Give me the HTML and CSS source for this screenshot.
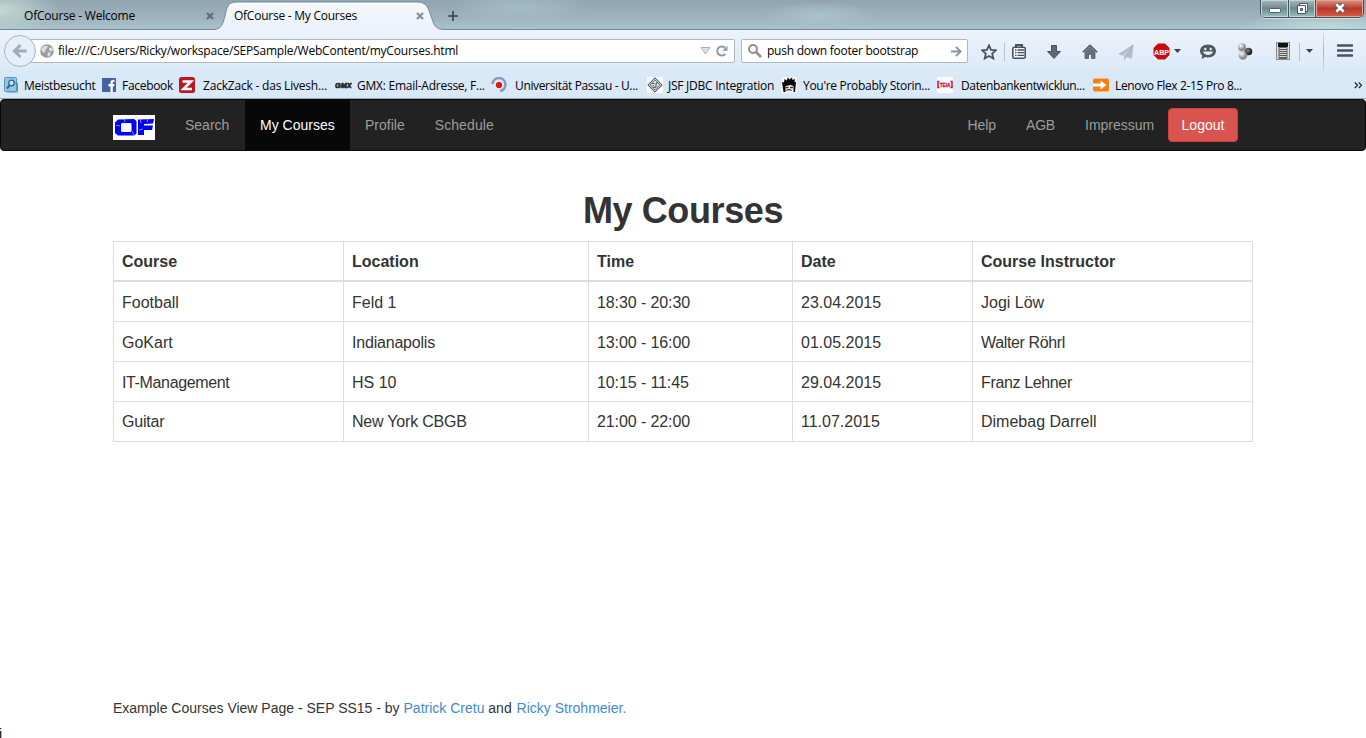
FILE: index.html
```
<!DOCTYPE html>
<html lang="en">
<head>
<meta charset="utf-8">
<title>OfCourse - My Courses</title>
<link rel="stylesheet" href="styles.css">
</head>
<body>
<header class="browser">
  <div class="tabstrip">
    <div class="tab"><span class="t t-tab1">OfCourse - Welcome</span>
      <svg class="close" width="8" height="8" viewBox="0 0 8 8"><path d="M1 1l6 6M7 1l-6 6" stroke="#5d6e7b" stroke-width="2.2"/></svg></div>
    <div class="tab tab-active">
      <svg class="tab-shape" width="240" height="30" viewBox="0 0 240 30"><defs><linearGradient id="tg" x2="0" y2="1"><stop offset="0" stop-color="#f6f9fd"/><stop offset="1" stop-color="#eaf1fa"/></linearGradient></defs><path d="M0 30V29.500C9 29.500 10 23 12 16C14 8 14 2 24 2H204C214 2 215 8 218 16C221 24 221 29.500 232 29.500V30Z" fill="url(#tg)"/><path d="M0 29.500C9 29.500 10 23 12 16C14 8 14 2 24 2H204C214 2 215 8 218 16C221 24 221 29.500 232 29.500" fill="none" stroke="#718b99"/></svg>
      <span class="t t-tab2">OfCourse - My Courses</span>
      <svg class="close" width="8" height="8" viewBox="0 0 8 8"><path d="M1 1l6 6M7 1l-6 6" stroke="#84909c" stroke-width="2.2"/></svg></div>
    <svg class="plus" width="10" height="10" viewBox="0 0 10 10"><path d="M5 0v10M0 5h10" stroke="#35444f" stroke-width="1.600"/></svg>
    <div class="wincontrols">
      <span class="wc wc-min"><svg width="12" height="5" viewBox="0 0 12 5"><rect x=".5" y=".5" width="11" height="4" rx="1" fill="#fff" stroke="#4b5b66"/></svg></span>
      <span class="wc wc-max"><svg width="13" height="13" viewBox="0 0 13 13"><path d="M3.500 1.500h8v8h-8z" fill="#fff" stroke="#4b5366"/><path d="M1.500 3.500h8v8h-8z" fill="#fff" stroke="#4b5366"/><path d="M4.500 6.500h2v2h-2z" fill="#88a" stroke="#4b5366"/></svg></span>
      <span class="wc wc-close"><svg width="12" height="10" viewBox="0 0 12 10"><path d="M2 1l8 8M10 1l-8 8" stroke="#5c4650" stroke-width="4.800"/><path d="M2.300 1.300l7.400 7.400M9.700 1.300L2.300 8.700" stroke="#fff" stroke-width="2.800"/></svg></span>
    </div>
  </div>

  <div class="toolbar">
    <span class="back"><svg width="16" height="16" viewBox="0 0 16 16"><path d="M14.500 8H4M8.500 2L2.500 8l6 6" fill="none" stroke="#a0abb7" stroke-width="3"/></svg></span>
    <div class="field urlbar">
      <svg width="14" height="14" viewBox="0 0 14 14"><circle cx="7" cy="7" r="6.800" fill="#9c9c9c"/><path d="M3 2.500l3-1 2 1-1 2-2 1 1 1.500-2 2L2 7 1 6zM9 4l3-.500 1 3-2 1-2-1zM8 8l3 1-1 2.500-2 1.300-.500-2z" fill="#dedede"/></svg>
      <span class="t t-url">file:///C:/Users/Ricky/workspace/SEPSample/WebContent/myCourses.html</span>
      <svg class="drop" width="11" height="8" viewBox="0 0 11 8"><path d="M1 .5h9L5.500 7z" fill="#d9e0e7" stroke="#a8b1bb"/></svg>
      <svg class="reload" width="12" height="12" viewBox="0 0 12 12"><path d="M9.300 8.800A4.500 4.500 0 1 1 8.800 2.800" fill="none" stroke="#8c9aa9" stroke-width="2"/><path d="M11.500.5v5.200H6.300z" fill="#8c9aa9"/></svg>
    </div>
    <div class="field search">
      <svg width="14" height="14" viewBox="0 0 14 14"><circle cx="5" cy="5" r="4" fill="none" stroke="#909090" stroke-width="2"/><path d="M8 8l5 5" stroke="#909090" stroke-width="2.600"/></svg>
      <span class="t t-search">push down footer bootstrap</span>
      <svg class="go" width="11" height="11" viewBox="0 0 11 11"><path d="M0 5.500h9M5 .8l4.700 4.700L5 10.200" fill="none" stroke="#8794a3" stroke-width="1.900"/></svg>
    </div>
    <svg class="i-star" width="16" height="16" viewBox="0 0 16 16"><path d="M8 1.300l2 4.500 4.900.5-3.700 3.300 1.100 4.900L8 12l-4.300 2.500 1.100-4.900L1.100 6.300 6 5.800z" fill="none" stroke="#48525d" stroke-width="1.800"/></svg>
    <i class="sep s1"></i>
    <svg class="i-list" width="14" height="15" viewBox="0 0 14 15"><path d="M4 3V1h6v2" fill="none" stroke="#48525d" stroke-width="2"/><rect x=".8" y="3.300" width="12.400" height="10.900" rx="1.500" fill="#f3f7fb" stroke="#48525d" stroke-width="1.600"/><path d="M3 6h1.500M5.500 6H12M3 8.700h1.500M5.500 8.700H12M3 11.400h1.500M5.500 11.400H12" stroke="#48525d" stroke-width="1.300"/></svg>
    <svg class="i-down" width="14" height="14" viewBox="0 0 14 14"><path d="M4.500.5h5v6h4L7 13.500.5 6.500h4z" fill="#606973" stroke="#48525d"/></svg>
    <svg class="i-home" width="16" height="15" viewBox="0 0 16 15"><path d="M.8 8.300L8 1.300l7.200 7" fill="none" stroke="#48525d" stroke-width="1.600"/><path d="M3 8l5-4.800L13 8v6.500H9.500v-4h-3v4H3z" fill="#65707b" stroke="#48525d" stroke-width=".7"/></svg>
    <svg class="i-plane" width="16" height="16" viewBox="0 0 16 16"><path d="M15 1L1 10l4 1.500zM15 1L6.500 12v3.500l2-2.500zM15 1l-1.500 13.500L9 12.500z" fill="#b7c0ca" stroke="#a4afba" stroke-width=".6"/></svg>
    <svg class="i-abp" width="17" height="17" viewBox="0 0 17 17"><path d="M5 .5h7l4.500 4.500v7L12 16.500H5L.5 12V5z" fill="#c70d0d"/><text x="8.500" y="11.500" text-anchor="middle" textLength="15" lengthAdjust="spacingAndGlyphs" class="abp">ABP</text></svg>
    <svg class="i-caret" width="7" height="4" viewBox="0 0 7 4"><path d="M0 0h7L3.500 4z" fill="#39434e"/></svg>
    <svg class="i-smile" width="16" height="15" viewBox="0 0 16 15"><path d="M8 .5c4.500 0 8 2.800 8 6.500s-3.500 6.500-8 6.500c-.8 0-1.800-.1-2.500-.4L1.500 15l.8-3.500C.8 10.300 0 8.800 0 7 0 3.300 3.500.5 8 .5z" fill="#505a66"/><circle cx="5.300" cy="5" r="1.200" fill="#e6edf5"/><circle cx="10.700" cy="5" r="1.200" fill="#e6edf5"/><path d="M3 7.500h10c-.8 4.500-9.200 4.500-10 0z" fill="#e6edf5"/></svg>
    <svg class="i-balls" width="16" height="17" viewBox="0 0 16 17"><defs><radialGradient id="bg" cx=".35" cy=".3"><stop offset="0" stop-color="#fff"/><stop offset="1" stop-color="#8c8c8c"/></radialGradient><radialGradient id="bd" cx=".4" cy=".35"><stop offset="0" stop-color="#888"/><stop offset="1" stop-color="#222"/></radialGradient></defs><circle cx="11.500" cy="8.500" r="3.800" fill="url(#bd)"/><circle cx="5" cy="4.300" r="4" fill="url(#bg)"/><circle cx="6" cy="12.500" r="4.300" fill="url(#bg)"/></svg>
    <svg class="i-note" width="14" height="18" viewBox="0 0 14 18"><rect x=".5" y=".5" width="13" height="17" fill="#ddd" stroke="#888"/><path d="M2 1h10v4H2z" fill="#111"/><path d="M3 7.500h8M3 9.500h8M3 11.500h8M3 13.500h8M3 15.500h8" stroke="#555"/><path d="M3 5.500h8v11H3z" fill="none" stroke="#666"/></svg>
    <i class="sep s2"></i>
    <svg class="i-caret2" width="7" height="4" viewBox="0 0 7 4"><path d="M0 0h7L3.500 4z" fill="#39434e"/></svg>
    <i class="sep s3"></i>
    <svg class="i-menu" width="16" height="13" viewBox="0 0 16 13"><path d="M1 1.500h14M1 6.500h14M1 11.500h14" stroke="#48535f" stroke-width="2.600" stroke-linecap="round"/></svg>
  </div>

  <nav class="bookmarks">
    <a class="bm g20"><svg width="14" height="16" viewBox="0 0 14 16"><rect x=".5" y=".5" width="12" height="14" rx="1" fill="#8fc7e4" stroke="#5595b8"/><path d="M11 6h2.500v9H3" fill="none" stroke="#5595b8"/><circle cx="7.500" cy="6" r="2.800" fill="#c4e5f4" stroke="#2b6587" stroke-width="1.300"/><path d="M5.500 8.500L3 11.500" stroke="#2b6587" stroke-width="2"/></svg><span class="t b1">Meistbesucht</span></a>
    <a class="bm g20"><svg width="14" height="14" viewBox="0 0 14 14"><path d="M0 0h14v14H0z" fill="#4661a2"/><path d="M8.500 14V8.500H6.500V6h2V4.500C8.500 2.500 9.700 1.500 12.500 1.800V4c-1.400 0-1.700.2-1.700 1.200V6h1.700l-.3 2.500h-1.400V14z" fill="#fff"/></svg><span class="t b2">Facebook</span></a>
    <a class="bm g24"><svg width="16" height="16" viewBox="0 0 16 16"><rect width="16" height="16" rx="2.500" fill="#b81820"/><path d="M3.500 4.500h8.500L4.500 12h8.500" fill="none" stroke="#fff" stroke-width="2.600"/></svg><span class="t b3">ZackZack - das Livesh...</span></a>
    <a class="bm g22"><svg width="17" height="16" viewBox="0 0 17 16"><text x="0" y="10.500" class="gmx" textLength="16.500" lengthAdjust="spacingAndGlyphs">GMX</text></svg><span class="t b4">GMX: Email-Adresse, F...</span></a>
    <a class="bm g24"><svg width="16" height="16" viewBox="0 0 16 16"><path d="M1.500 7A6.500 6.500 0 1 1 9 14" fill="none" stroke="#8499bd" stroke-width="2.500"/><circle cx="8" cy="8" r="3.100" fill="#ec0e13"/></svg><span class="t b5">Universität Passau - U...</span></a>
    <a class="bm g21"><svg width="16" height="16" viewBox="0 0 16 16"><path d="M0 0h16v16H0z" fill="#fafafa"/><path d="M8 .8L15.200 8 8 15.200.8 8z" fill="#ccc" stroke="#444"/><path d="M8 3.200L12.800 8 8 12.800 3.200 8z" fill="#e9eee9" stroke="#668"/><path d="M5 6.500h2.500M5.500 8.500H7M9 6v3.500c0 1-2 1-3 .5M9 6h2" stroke="#27724c" stroke-width="1.200" fill="none"/></svg><span class="t b6">JSF JDBC Integration</span></a>
    <a class="bm g22"><svg width="16" height="16" viewBox="0 0 16 16"><path d="M0 0h16v16H0z" fill="#f4f4f4"/><path d="M2.500 15L1 5l2 .5L3.500 2l2 1.500L7 .5l1.500 2L11 .5l.5 2.500 2.500-1-.5 3H15l-1 10h-1.500V9l-3-1-5 1v6z" fill="#090909"/><path d="M4.500 10.500h3M9 10.500h3M5.500 13.500c1.500-1 3.500-1 5 0" stroke="#333" stroke-width="1.300" fill="none"/></svg><span class="t b7">You're Probably Storin...</span></a>
    <a class="bm g24"><svg width="16" height="16" viewBox="0 0 16 16"><path d="M0 0h16v16H0z" fill="#fcfafa"/><path d="M2.500 4.500H1v6h1.500M13.500 4.500H15v6h-1.500" fill="none" stroke="#b8173a" stroke-width="1.500"/><text x="2.700" y="9.800" class="teia" textLength="10.600" lengthAdjust="spacingAndGlyphs">TEIA</text></svg><span class="t b8">Datenbankentwicklun...</span></a>
    <a class="bm g22"><svg width="16" height="16" viewBox="0 0 16 16"><rect y="1.500" width="16" height="13" rx="2" fill="#ff7d0a"/><path d="M0 6.500h7.500V3.500L13.500 8l-6 4.500v-3H0z" fill="#fff"/></svg><span class="t b9">Lenovo Flex 2-15 Pro 8...</span></a>
    <svg class="more" width="8" height="7" viewBox="0 0 8 7"><path d="M.8.5l2.700 2.800L.8 6M4.800.5l2.700 2.800L4.800 6" fill="none" stroke="#222" stroke-width="1.200"/></svg>
  </nav>
</header>

<nav class="navbar">
  <div class="container">
    <svg class="logo" width="42" height="25" viewBox="0 0 42 25"><path d="M0 0h42v25H0z" fill="#fff"/><path d="M5 4.500l16-.5 2.500 2v12.500l-2.500 2H5L2 18V7.500zM8 9v7.500l2 .5h7.500l1-1V8.500L17 8H9z" fill="#00f" fill-rule="evenodd"/><path d="M25 4.500L41 4l-1 4.500-9 .5v1.500h9l-1 4.500h-8v5h-6z" fill="#00f"/><path d="M3 10l4 1M11 4l1 3M19 16l2 4M27 3l1 5M26 15l4-1M35 4l-1 3" stroke="#dfe3ff" stroke-width=".6"/></svg>
    <a class="n1">Search</a><a class="active">My Courses</a><a>Profile</a><a class="n4">Schedule</a>
    <a class="right">Help</a><a class="agb">AGB</a><a class="imp">Impressum</a><button class="logout">Logout</button>
  </div>
</nav>

<main class="content">
  <h1>My Courses</h1>
  <table class="courses">
    <colgroup><col class="c1"><col class="c2"><col class="c3"><col class="c4"><col class="c5"></colgroup>
    <thead><tr><th>Course</th><th>Location</th><th>Time</th><th>Date</th><th>Course Instructor</th></tr></thead>
    <tbody>
      <tr><td>Football</td><td>Feld 1</td><td class="time">18:30 - 20:30</td><td>23.04.2015</td><td>Jogi Löw</td></tr>
      <tr><td>GoKart</td><td class="tight">Indianapolis</td><td class="time">13:00 - 16:00</td><td>01.05.2015</td><td class="tighter">Walter Röhrl</td></tr>
      <tr><td class="tighter">IT-Management</td><td>HS 10</td><td class="time">10:15 - 11:45</td><td>29.04.2015</td><td class="tighter">Franz Lehner</td></tr>
      <tr class="last"><td class="tight">Guitar</td><td class="tight">New York CBGB</td><td class="time">21:00 - 22:00</td><td>11.07.2015</td><td>Dimebag Darrell</td></tr>
    </tbody>
  </table>
</main>
<footer class="footer">Example Courses View Page - SEP SS15 - by <a>Patrick Cretu</a> and <a class="ricky">Ricky Strohmeier.</a></footer>
<div class="stray">i</div>
</body>
</html>
```
FILE: styles.css
```
* { box-sizing: border-box; }
html, body { height: 738px; overflow: hidden; }
body { margin: 0; display: flex; flex-direction: column; background: #fff; color: #333; font: 14px/20px "Liberation Sans", Arial, sans-serif; }
svg { display: block; flex: none; }

/* browser window */
.browser { height: 99px; flex: none; font: 12px/16px "Open Sans", "Noto Sans", sans-serif; color: #000; background: linear-gradient(#edf3fb 30px, #d9e8f7 76px, #dae9f8 98px); border-bottom: 1px solid #8fa5b8; }
.t { white-space: nowrap; flex: none; letter-spacing: -.3px; }
.t-tab1, .t-url { letter-spacing: -.2px; }
.t-tab2, .t-search, .b4, .b6 { letter-spacing: -.25px; }
.b3 { letter-spacing: -.2px; }
.b5, .b8, .b9 { letter-spacing: -.35px; }
.tabstrip { height: 30px; display: flex; align-items: center; position: relative; border-bottom: 1px solid #718b99;
  background: radial-gradient(ellipse 60px 24px at 0 10px, #c3dad3, transparent), radial-gradient(ellipse 70px 20px at 520px 8px, #a3bcc8, transparent), radial-gradient(ellipse 60px 14px at 820px 16px, #a8c3ce, transparent), radial-gradient(ellipse 90px 16px at 1330px 27px, #bcd9d8, transparent), linear-gradient(#90a5b1, #9fb1bd 60%, #a9c3ce); }
.tab { width: 213px; height: 30px; padding: 3px 0 0 24px; display: flex; align-items: center; }
.tab .t { width: 182px; }
.tab-active { position: relative; width: 235px; padding-left: 21px; }
.tab-shape { position: absolute; left: 0; top: 0; }
.tab-active .t, .tab-active .close { position: relative; }
.plus { margin-top: 3px; }
.wincontrols { margin: 0 2px 0 auto; align-self: flex-start; display: flex; height: 18px; width: 104px; border: 1px solid #43545e; border-top: 0; border-radius: 0 0 5px 5px; overflow: hidden; box-shadow: 0 1px 0 #d1e1e6; }
.wc { display: flex; align-items: center; justify-content: center; padding-bottom: 1px; background: linear-gradient(#a5b8bb, #70898e 50%, #9ac0be); box-shadow: inset 0 0 0 1px #c4d5d8; }
.wc-min { width: 28px; padding-top: 5px; border-right: 1px solid #43545e; }
.wc-max { width: 27px; border-right: 1px solid #43545e; }
.wc-close { flex: 1; padding-bottom: 2px; background: linear-gradient(#d99586, #b8392a 50%, #d65d43); box-shadow: inset 0 0 0 1px #e2a296; }

.toolbar { height: 43px; display: flex; align-items: center; }
.back { position: relative; z-index: 1; width: 32px; height: 32px; margin: -2px 0 0 4px; border: 1px solid #a5b4c4; border-radius: 50%; background: #e6eef8; display: flex; align-items: center; justify-content: center; flex: none; }
.field { height: 24px; margin-top: -1px; background: #fff; border: 1px solid #a9b9ca; border-radius: 2px; display: flex; align-items: center; flex: none; }
.urlbar { width: 717px; margin-left: -18px; padding-left: 21px; }
.urlbar .t { margin-left: 4px; }
.drop { margin-left: auto; }
.reload { margin: 0 6px 0 5px; }
.search { width: 227px; margin-left: 6px; padding: 0 5px 0 6px; }
.search .t { margin-left: 5px; }
.go { margin-left: auto; }
.sep { width: 1px; height: 18px; background: #b4c2d0; flex: none; }
.i-star { margin-left: 13px; }
.s1 { margin-left: 7px; }
.i-list { margin-left: 7px; margin-top: -1px; }
.i-down { margin-left: 21px; }
.i-home { margin-left: 21px; }
.i-plane { margin-left: 20px; }
.i-abp { margin-left: 19px; margin-top: -1px; }
.i-caret { margin-left: 4px; margin-top: -1px; }
.i-smile { margin-left: 19px; }
.i-balls { margin-left: 21px; }
.i-note { margin-left: 23px; margin-top: -1px; }
.s2 { margin-left: 9px; }
.i-caret2 { margin-left: 6px; margin-top: -1px; }
.s3 { margin-left: 10px; height: 40px; background: linear-gradient(#d3dfeb, #a4b2c0, #d3dfeb); }
.i-menu { margin-left: 13px; margin-top: -2px; }
.abp { font: bold 8px "Liberation Sans", sans-serif; fill: #fff; }
.gmx { font: bold italic 7px "Liberation Sans", sans-serif; fill: #222; stroke: #222; stroke-width: .6; }
.teia { font: bold 6px "Liberation Sans", sans-serif; fill: #b8173a; stroke: #b8173a; stroke-width: .3; }

.bookmarks { height: 25px; padding-left: 4px; display: grid; grid-template-columns: 98px 77px 156px 156px 156px 134px 156px 156px 261px 8px; align-items: center; }
.bm { display: grid; align-items: center; }
.bm svg { margin-top: -1px; }
.g20 { grid-template-columns: 20px auto; }
.g21 { grid-template-columns: 21px auto; }
.g22 { grid-template-columns: 22px auto; }
.g24 { grid-template-columns: 24px auto; }

/* site navigation */
.navbar { height: 52px; flex: none; background: #222; border: 1px solid #080808; border-radius: 4px; }
.container { width: 1140px; margin: 0 auto; height: 50px; display: flex; align-items: center; padding-right: 15px; }
.container a { height: 50px; padding: 15px; color: #9d9d9d; }
.container .n1 { width: 75px; }
.container .active { width: 105px; background: #080808; color: #fff; }
.container .n4 { letter-spacing: .1px; }
.container .right { margin-left: auto; letter-spacing: -.1px; }
.container .agb { width: 59px; letter-spacing: -.2px; }
.container .imp { width: 98px; white-space: nowrap; }
.logo { margin: 4px 15px 0 0; }
.logout { width: 70px; height: 34px; margin-top: 0; padding: 0; border: 1px solid #d43f3a; border-radius: 4px; background: #d9534f; color: #fff; font: inherit; }

/* courses */
.content { width: 1140px; margin: 0 auto; height: 541px; flex: none; }
h1 { margin: 40px 0 10px; font-size: 36px; line-height: 40px; font-weight: bold; text-align: center; letter-spacing: -.4px; }
.courses { width: 1140px; table-layout: fixed; border-collapse: separate; border-spacing: 0; border: solid #ddd; border-width: 1px 0 0 1px; font-size: 16px; line-height: 22px; }
.c1 { width: 230px; } .c2 { width: 245px; } .c3 { width: 204px; } .c4 { width: 180px; } .c5 { width: 280px; }
.courses th, .courses td { height: 40px; padding: 9px 8px 7px; text-align: left; vertical-align: top; border: solid #ddd; border-width: 0 1px 1px 0; }
.courses th { border-bottom-width: 2px; }
.courses td { padding-top: 10px; }
.courses .last td { padding-top: 9px; }
.courses .time { letter-spacing: -.1px; }
.courses .tight { letter-spacing: -.2px; }
.courses .tighter { letter-spacing: -.36px; }
.footer { width: 1140px; height: 32px; margin: 6px auto 0; flex: none; }
.footer a { color: #428bca; }
.footer .ricky { margin-left: 1px; }
.stray { height: 12px; line-height: 12px; margin: -2px 0 0 -1px; color: #000; }
```
